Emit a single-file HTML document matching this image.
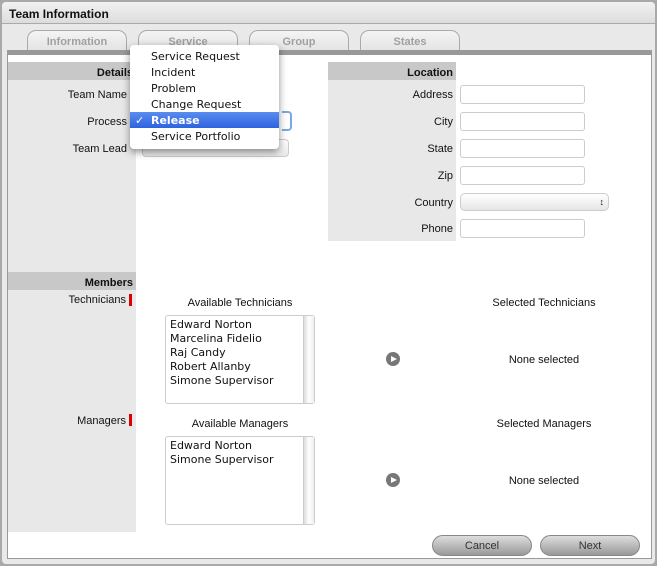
<!DOCTYPE html>
<html><head><style>
*{margin:0;padding:0;box-sizing:border-box}
body{width:657px;height:566px;background:#a9a9a9;font-family:"Liberation Sans",sans-serif;font-size:11px;color:#111;position:relative;overflow:hidden}
.a{position:absolute}
.frame{left:2px;top:2px;width:653px;height:562px;background:#e9e9e9;border-radius:4px}
.title{left:2px;top:2px;width:653px;height:22px;background:linear-gradient(#f2f2f2,#dcdcdc);border-bottom:1px solid #aaa;border-radius:4px 4px 0 0;font-weight:bold;font-size:12px;padding:5px 7px}
.tab{top:30px;height:22px;border:1px solid #aaa;border-bottom:none;border-radius:9px 9px 0 0;background:linear-gradient(#f4f4f4,#e2e2e2);color:#a0a0a0;font-weight:bold;text-align:center;padding-top:5px}
.bar{left:7px;top:50px;width:645px;height:5px;background:#999}
.content{left:7px;top:55px;width:645px;height:504px;background:#fff;border:1px solid #999;border-top:none}
.lab{text-align:right;width:119px;left:8px}
.hdr{background:#c8c8c8;font-weight:bold;text-align:right;padding:5px 3px 0 0;height:18px}
.inp{height:19px;border:1px solid #ccc;border-radius:3px;background:#fff;left:460px;width:125px}
.req{width:3px;height:12px;background:#d00}
.list{left:165px;width:150px;border:1px solid #ccc;border-radius:3px;font-family:"DejaVu Sans",sans-serif;font-size:11px;line-height:14px;padding:2px 4px;background:#fff}
.list:after{content:"";position:absolute;right:0;top:0;width:10px;height:100%;background:linear-gradient(90deg,#ddd,#fff,#eee);border-left:1px solid #ccc}
.play{width:14px;height:14px;border-radius:50%;background:#777;left:386px}
.play:after{content:"";position:absolute;left:5px;top:3.5px;border-left:6px solid #fff;border-top:3.5px solid transparent;border-bottom:3.5px solid transparent}
.btn{top:535px;width:100px;height:21px;border-radius:11px;background:linear-gradient(#ddd,#999);border:1px solid #888;text-align:center;padding-top:4px;color:#333}
.menu{left:130px;top:45px;width:149px;height:104px;background:#fff;border-radius:4px;box-shadow:0 3px 8px rgba(0,0,0,.45);font-family:"DejaVu Sans",sans-serif;font-size:11px}
.menu div{position:absolute;left:21px;height:16px;line-height:16px}
.sel{left:0!important;width:149px;background:linear-gradient(#5a8cf0,#2d63e0);color:#fff;padding-left:21px;font-weight:bold}
</style></head><body>
<div class="a frame"></div>
<div class="a title">Team Information</div>
<div class="a tab" style="left:27px;width:100px">Information</div>
<div class="a tab" style="left:138px;width:100px">Service</div>
<div class="a tab" style="left:249px;width:100px">Group</div>
<div class="a tab" style="left:360px;width:100px">States</div>
<div class="a bar"></div>
<div class="a content"></div>
<div class="a" style="left:8px;top:62px;width:128px;height:470px;background:#e8e8e8"></div>
<div class="a hdr" style="left:8px;top:62px;width:128px">Details</div>
<div class="a lab" style="top:89px">Team Name</div>
<div class="a lab" style="top:116px">Process</div>
<div class="a lab" style="top:143px">Team Lead</div>
<div class="a" style="left:142px;top:139px;width:147px;height:18px;border:1px solid #ccc;border-radius:4px;background:linear-gradient(#fff,#e8e8e8)"></div>
<div class="a" style="left:282px;top:111px;width:10px;height:20px;border:2px solid #7aa7e8;border-left:none;border-radius:0 4px 4px 0"></div>
<div class="a" style="left:328px;top:62px;width:128px;height:179px;background:#e8e8e8"></div>
<div class="a hdr" style="left:328px;top:62px;width:128px">Location</div>
<div class="a" style="left:328px;top:89px;width:125px;text-align:right">Address</div>
<div class="a" style="left:328px;top:116px;width:125px;text-align:right">City</div>
<div class="a" style="left:328px;top:143px;width:125px;text-align:right">State</div>
<div class="a" style="left:328px;top:170px;width:125px;text-align:right">Zip</div>
<div class="a" style="left:328px;top:197px;width:125px;text-align:right">Country</div>
<div class="a" style="left:328px;top:223px;width:125px;text-align:right">Phone</div>
<div class="a inp" style="top:85px"></div>
<div class="a inp" style="top:112px"></div>
<div class="a inp" style="top:139px"></div>
<div class="a inp" style="top:166px"></div>
<div class="a" style="left:460px;top:193px;width:149px;height:18px;border:1px solid #ccc;border-radius:5px;background:linear-gradient(#fff,#e6e6e6);font-size:9px;text-align:right;padding-right:4px;line-height:16px">&#8597;</div>
<div class="a inp" style="top:219px"></div>
<div class="a hdr" style="left:8px;top:272px;width:128px">Members</div>
<div class="a lab" style="top:294px;width:118px">Technicians</div>
<div class="a req" style="left:129px;top:294px"></div>
<div class="a lab" style="top:415px;width:118px">Managers</div>
<div class="a req" style="left:129px;top:414px"></div>
<div class="a" style="left:165px;top:297px;width:150px;text-align:center">Available Technicians</div>
<div class="a" style="left:470px;top:297px;width:148px;text-align:center">Selected Technicians</div>
<div class="a list" style="top:315px;height:89px">Edward Norton<br>Marcelina Fidelio<br>Raj Candy<br>Robert Allanby<br>Simone Supervisor</div>
<div class="a play" style="top:352px"></div>
<div class="a" style="left:470px;top:354px;width:148px;text-align:center">None selected</div>
<div class="a" style="left:165px;top:418px;width:150px;text-align:center">Available Managers</div>
<div class="a" style="left:470px;top:418px;width:148px;text-align:center">Selected Managers</div>
<div class="a list" style="top:436px;height:89px">Edward Norton<br>Simone Supervisor</div>
<div class="a play" style="top:473px"></div>
<div class="a" style="left:470px;top:475px;width:148px;text-align:center">None selected</div>
<div class="a btn" style="left:432px">Cancel</div>
<div class="a btn" style="left:540px">Next</div>
<div class="a menu">
<div style="top:4px">Service Request</div>
<div style="top:20px">Incident</div>
<div style="top:36px">Problem</div>
<div style="top:52px">Change Request</div>
<div class="sel" style="top:67px;line-height:17px"><span style="position:absolute;left:5px">&#10003;</span>Release</div>
<div style="top:84px">Service Portfolio</div>
</div>
</body></html>
